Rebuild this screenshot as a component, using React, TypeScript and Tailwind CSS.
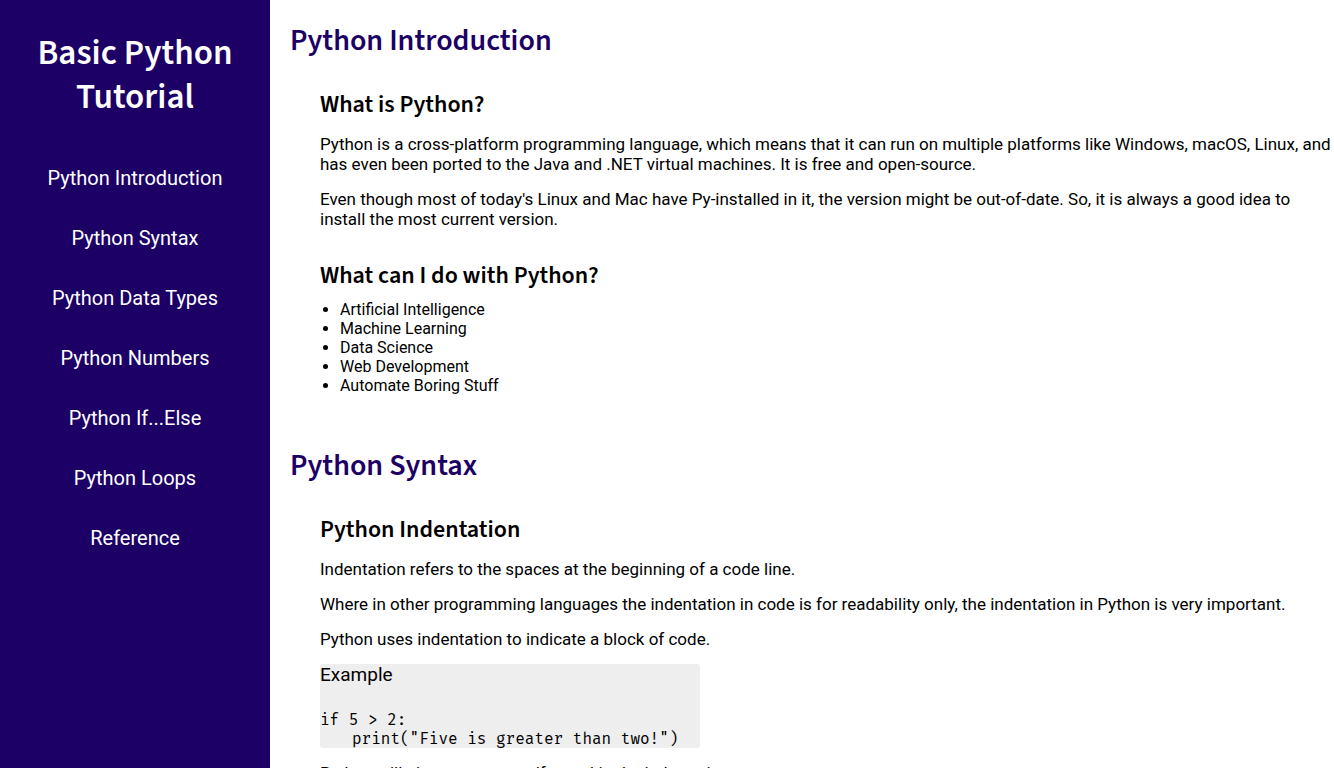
import type { ReactNode } from "react";

const links = [
  { id: "introduction", label: "Python Introduction" },
  { id: "syntax", label: "Python Syntax" },
  { id: "data-types", label: "Python Data Types" },
  { id: "numbers", label: "Python Numbers" },
  { id: "if-else", label: "Python If...Else" },
  { id: "loops", label: "Python Loops" },
  { id: "reference", label: "Reference" },
];

const uses = [
  "Artificial Intelligence",
  "Machine Learning",
  "Data Science",
  "Web Development",
  "Automate Boring Stuff",
];

function Section({ id, title, children }: { id: string; title: string; children: ReactNode }) {
  return (
    <section id={id} className="mb-[51px] pl-5">
      <h2 className="mb-[30px] font-['Source_Sans_Pro','Source_Sans_3','Noto_Sans_CJK_JP',sans-serif] text-[30px] leading-10 font-semibold text-[#1c0065]">
        {title}
      </h2>
      <div className="pl-[30px]">{children}</div>
    </section>
  );
}

function Heading({ children }: { children: ReactNode }) {
  return (
    <h3 className="font-['Source_Sans_Pro','Source_Sans_3','Noto_Sans_CJK_JP',sans-serif] text-2xl leading-7 font-semibold">
      {children}
    </h3>
  );
}

function Text({ children }: { children: ReactNode }) {
  return <p className="my-[15px] text-[17px] leading-5">{children}</p>;
}

export default function App() {
  return (
    <div className="flex h-screen overflow-hidden bg-white font-[Roboto,sans-serif] text-black">
      <nav aria-label="Tutorial" className="w-[270px] shrink-0 overflow-hidden bg-[#1c0065] pt-[31px] text-center text-white">
        <h1 className="px-5 font-['Source_Sans_Pro','Source_Sans_3','Noto_Sans_CJK_JP',sans-serif] text-[35px] leading-11 font-semibold">
          Basic Python Tutorial
        </h1>
        <ul className="mt-[29px]">
          {links.map((link) => (
            <li key={link.id}>
              <a href={"#" + link.id} className="block text-xl leading-[60px]">
                {link.label}
              </a>
            </li>
          ))}
        </ul>
      </nav>
      <main className="min-w-0 flex-1 overflow-x-hidden overflow-y-auto pt-[21px] [scrollbar-width:none]">
        <Section id="introduction" title="Python Introduction">
          <Heading>What is Python?</Heading>
          <Text>
            Python is a cross-platform programming language, which means that it can run on multiple
            platforms like Windows, macOS, Linux, and has even been ported to the Java and .NET virtual
            machines. It is free and open-source.
          </Text>
          <Text>
            Even though most of today's Linux and Mac have Py-installed in it, the version might be
            out-of-date. So, it is always a good idea to install the most current version.
          </Text>
          <div className="mt-[33px]">
            <Heading>What can I do with Python?</Heading>
            <ul className="mt-[10px] list-disc pl-5 text-base leading-[19px]">
              {uses.map((use) => (
                <li key={use}>{use}</li>
              ))}
            </ul>
          </div>
        </Section>
        <Section id="syntax" title="Python Syntax">
          <Heading>Python Indentation</Heading>
          <Text>Indentation refers to the spaces at the beginning of a code line.</Text>
          <Text>
            Where in other programming languages the indentation in code is for readability only, the
            indentation in Python is very important.
          </Text>
          <Text>Python uses indentation to indicate a block of code.</Text>
          <div className="w-[380px] rounded-[3px] bg-[#eeeeee]">
            <h4 className="text-[19px] leading-[22px]">Example</h4>
            <pre className="pt-6 text-base leading-[19px]">
              <code className="block font-['Fira_Mono','Liberation_Mono',monospace]">
                <span className="block">{"if 5 > 2:"}</span>
                <span className="block pl-8">{'print("Five is greater than two!")'}</span>
              </code>
            </pre>
          </div>
          <Text>Python will give you an error if you skip the indentation.</Text>
        </Section>
      </main>
    </div>
  );
}
